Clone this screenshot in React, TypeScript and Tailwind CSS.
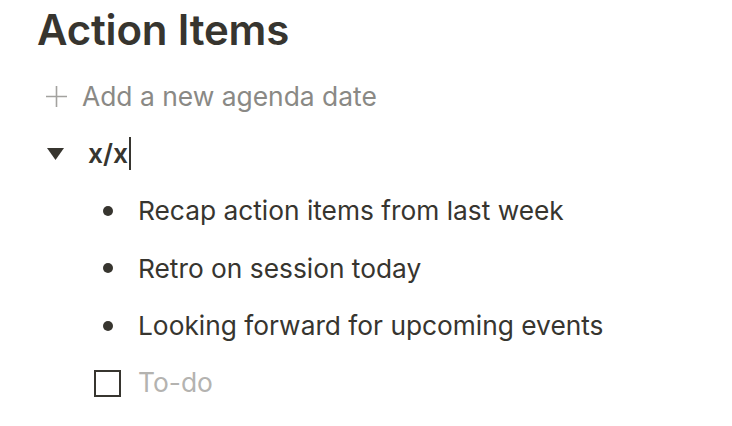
import React from "react";

export default function App() {
  const font = { fontFamily: "Inter, 'Noto Sans', sans-serif" };
  return (
    <div className="w-[732px] h-[426px] bg-white overflow-hidden text-[#37352f]" style={font}>
      <div className="pl-[37px] pt-[3px]">
        <h1 className="text-[42px] font-semibold leading-[54px] tracking-[-0.2px] mb-[11px]">Action Items</h1>
        <div className="flex items-center h-[57px] text-[#8a8985]">
          <svg width="21" height="21" viewBox="0 0 21 21" className="ml-[9px] mr-[15px]">
            <path d="M10.5 0v21M0 10.5h21" stroke="#a3a29f" strokeWidth="1.6" />
          </svg>
          <span className="text-[26.4px]">Add a new agenda date</span>
        </div>
        <div className="flex items-center h-[57px]">
          <svg width="17" height="12" viewBox="0 0 17 12" className="ml-[10px] mr-[24px]">
            <path d="M0 0h17L8.5 12z" fill="#37352f" />
          </svg>
          <span className="text-[26.4px] font-semibold">x/x</span>
          <span className="w-[1.5px] h-[33px] bg-[#37352f] ml-[1px]" />
        </div>
        <div className="pl-[66px]">
          {["Recap action items from last week", "Retro on session today", "Looking forward for upcoming events"].map((t) => (
            <div key={t} className="flex items-center h-[57.5px]">
              <span className="w-[10px] h-[10px] rounded-full bg-[#37352f] mr-[25px]" />
              <span className="text-[26.3px]">{t}</span>
            </div>
          ))}
        </div>
        <div className="flex items-center h-[57px] pl-[57px]">
          <span className="w-[27px] h-[27px] border-[2.5px] border-[#37352f] mr-[17px]" />
          <span className="text-[26.4px] text-[#b4b3b0]">To-do</span>
        </div>
      </div>
    </div>
  );
}
